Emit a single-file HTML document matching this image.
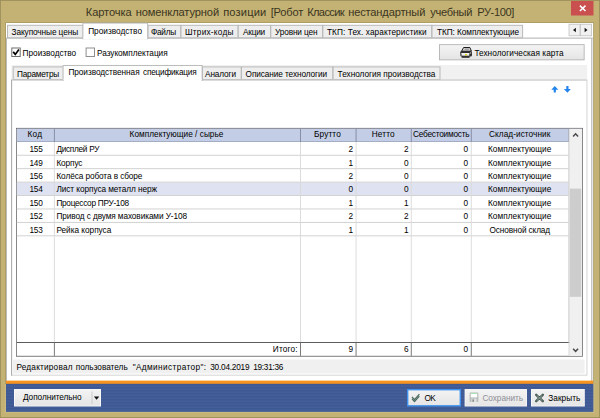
<!DOCTYPE html>
<html lang="ru">
<head>
<meta charset="utf-8">
<title>Карточка номенклатурной позиции</title>
<style>
html,body{margin:0;padding:0;}
body{width:600px;height:418px;overflow:hidden;position:relative;background:#c4b274;font-family:"Liberation Sans",sans-serif;font-size:8.25px;color:#000;}
.t{position:absolute;display:block;white-space:nowrap;line-height:12px;height:12px;}
</style>
</head>
<body>
<svg width="600" height="418" viewBox="0 0 600 418" style="position:absolute;left:0;top:0">
<defs><linearGradient id="bg" x1="0" y1="0" x2="0" y2="1"><stop offset="0" stop-color="#f3f3f3"/><stop offset="1" stop-color="#e5e5e5"/></linearGradient><pattern id="st" width="4" height="1.5" patternUnits="userSpaceOnUse"><rect width="4" height="0.75" fill="#3b5690"/><rect y="0.75" width="4" height="0.75" fill="#45609b"/></pattern></defs>
<rect x="0" y="0" width="600" height="418" fill="#c4b274"/>
<rect x="0" y="0" width="600" height="418" fill="none" stroke="#998b58" stroke-width="1.6"/>
<rect x="5.4" y="22.4" width="588.5" height="361.6" fill="#a0925a"/>
<rect x="5.2" y="384" width="589.1" height="28.7" fill="#cebf88"/>
<rect x="6" y="23" width="587.2" height="362" fill="#ffffff"/>
<rect x="571" y="1" width="22.5" height="14.5" fill="#c9504f"/>
<path d="M579.9 5.6 L585.5 11 M585.5 5.6 L579.9 11" stroke="#fff" stroke-width="1.5" fill="none"/>
<rect x="6" y="37.7" width="586.6" height="0.9" fill="#c4c4c4"/>
<rect x="6" y="38" width="0.9" height="343" fill="#b4b4b4"/>
<rect x="591.3" y="38" width="1" height="343" fill="#adadad"/>
<rect x="7" y="24.8" width="76.7" height="13.5" fill="#b9b9b9"/>
<rect x="8" y="25.8" width="74.7" height="11.5" fill="#eeeeee"/>
<rect x="147.5" y="24.8" width="33.7" height="13.5" fill="#b9b9b9"/>
<rect x="148.5" y="25.8" width="31.7" height="11.5" fill="#eeeeee"/>
<rect x="180.5" y="24.8" width="58" height="13.5" fill="#b9b9b9"/>
<rect x="181.5" y="25.8" width="56" height="11.5" fill="#eeeeee"/>
<rect x="237.8" y="24.8" width="33.2" height="13.5" fill="#b9b9b9"/>
<rect x="238.8" y="25.8" width="31.2" height="11.5" fill="#eeeeee"/>
<rect x="270.3" y="24.8" width="52.8" height="13.5" fill="#b9b9b9"/>
<rect x="271.3" y="25.8" width="50.8" height="11.5" fill="#eeeeee"/>
<rect x="322.4" y="24.8" width="109.8" height="13.5" fill="#b9b9b9"/>
<rect x="323.4" y="25.8" width="107.8" height="11.5" fill="#eeeeee"/>
<rect x="431.5" y="24.8" width="91.6" height="13.5" fill="#b9b9b9"/>
<rect x="432.5" y="25.8" width="89.6" height="11.5" fill="#eeeeee"/>
<rect x="6" y="37.7" width="586.6" height="0.9" fill="#c4c4c4"/>
<rect x="82.4" y="22.6" width="65.7" height="16.6" fill="#bcbcbc"/>
<rect x="83.4" y="23.6" width="63.7" height="14.6" fill="#ffffff"/>
<rect x="83.4" y="37" width="63.7" height="2.4" fill="#ffffff"/>
<rect x="568.6" y="23.8" width="11.8" height="12.4" fill="#c2c2c2"/>
<rect x="569.4" y="24.6" width="10.2" height="10.8" fill="#f1f1f1"/>
<rect x="580" y="23.8" width="12" height="12.4" fill="#c2c2c2"/>
<rect x="580.8" y="24.6" width="10.4" height="10.8" fill="#f1f1f1"/>
<path d="M575.9 27.8 L573 30 L575.9 32.2 Z" fill="#111"/>
<path d="M584.6 27.8 L587.5 30 L584.6 32.2 Z" fill="#111"/>
<rect x="11.3" y="47.5" width="9.4" height="9.5" fill="#6e6e6e"/>
<rect x="12.3" y="48.5" width="7.4" height="7.5" fill="#ffffff"/>
<path d="M13.2 51.9 L15.3 54.4 L18.9 49.6" stroke="#000" stroke-width="1.7" fill="none"/>
<rect x="85.6" y="47.5" width="9.4" height="9.5" fill="#8f8f8f"/>
<rect x="86.6" y="48.5" width="7.4" height="7.5" fill="#ffffff"/>
<rect x="439" y="44.2" width="145.6" height="16.1" fill="#b4b4b4"/>
<rect x="439.9" y="45.1" width="143.8" height="14.3" fill="url(#bg)"/>
<path d="M463.6 47.5 H469.9 L471.4 51.2 H461.6 Z" fill="#d9d9d9" stroke="#1c1c1c" stroke-width="1"/>
<rect x="464.6" y="48.7" width="4.4" height="0.8" fill="#6a6a6a"/>
<path d="M460.3 52.2 Q460.3 50.9 461.6 50.9 H470.6 Q472 50.9 472 52.4 V55 Q472 56.5 470.6 56.5 H461.6 Q460.3 56.5 460.3 55.2 Z" fill="#2e2e2e"/>
<rect x="461.5" y="53.1" width="7.8" height="2.6" fill="#ececec"/>
<rect x="461.5" y="53.1" width="7.8" height="0.7" fill="#ffffff"/>
<rect x="465" y="54.1" width="2.1" height="1.2" fill="#e2d400"/>
<rect x="469.9" y="52.2" width="1.3" height="1.6" fill="#9a9a9a"/>
<rect x="461.6" y="56.3" width="8" height="1.4" fill="#0c0c0c"/>
<rect x="11.4" y="65" width="575.8" height="15" fill="#f1f1f1"/>
<rect x="11.2" y="79.6" width="576.2" height="296" fill="#cfcfcf"/>
<rect x="11.2" y="79.6" width="1" height="296" fill="#a4a4a4"/>
<rect x="12.2" y="80.5" width="574.3" height="294.2" fill="#ffffff"/>
<rect x="12.7" y="66.4" width="51.2" height="13.6" fill="#b9b9b9"/>
<rect x="13.7" y="67.4" width="49.2" height="11.6" fill="#eeeeee"/>
<rect x="202" y="66.4" width="39.7" height="13.6" fill="#b9b9b9"/>
<rect x="203" y="67.4" width="37.7" height="11.6" fill="#eeeeee"/>
<rect x="241" y="66.4" width="92.3" height="13.6" fill="#b9b9b9"/>
<rect x="242" y="67.4" width="90.3" height="11.6" fill="#eeeeee"/>
<rect x="332.6" y="66.4" width="107.9" height="13.6" fill="#b9b9b9"/>
<rect x="333.6" y="67.4" width="105.9" height="11.6" fill="#eeeeee"/>
<rect x="12.2" y="79.6" width="574.3" height="0.9" fill="#cfcfcf"/>
<rect x="62.6" y="65" width="140" height="16" fill="#bcbcbc"/>
<rect x="63.6" y="66" width="138" height="14" fill="#ffffff"/>
<rect x="63.6" y="79" width="138" height="2.2" fill="#ffffff"/>
<path d="M554.8 86 L551.3 89.7 H553.7 V92.6 H555.9 V89.7 H558.3 Z" fill="#2484ee"/>
<path d="M567.4 92.7 L563.9 89 H566.3 V86.1 H568.5 V89 H570.9 Z" fill="#2484ee"/>
<rect x="16" y="128" width="566.8" height="228.7" fill="#6b6b6b"/>
<rect x="16" y="127.9" width="566.8" height="1" fill="#63676f"/>
<rect x="16.8" y="128.8" width="565.2" height="227" fill="#ffffff"/>
<rect x="16.8" y="128.8" width="552.2" height="13" fill="#c3cee6"/>
<rect x="16.8" y="141" width="552.2" height="0.9" fill="#9fa9c0"/>
<rect x="16.8" y="182.46" width="552" height="12.83" fill="#dfe3f1"/>
<rect x="16.8" y="154.8" width="552" height="0.9" fill="#cdcdcd"/>
<rect x="16.8" y="168.23" width="552" height="0.9" fill="#cdcdcd"/>
<rect x="16.8" y="181.66" width="552" height="0.9" fill="#cdcdcd"/>
<rect x="16.8" y="195.09" width="552" height="0.9" fill="#cdcdcd"/>
<rect x="16.8" y="208.52" width="552" height="0.9" fill="#cdcdcd"/>
<rect x="16.8" y="221.95" width="552" height="0.9" fill="#cdcdcd"/>
<rect x="16.8" y="235.38" width="552" height="0.9" fill="#cdcdcd"/>
<rect x="53.9" y="141.9" width="0.9" height="200.1" fill="#d9d9d9"/>
<rect x="53.9" y="128.8" width="0.9" height="13.1" fill="#7f889e"/>
<rect x="300" y="141.9" width="0.9" height="200.1" fill="#d9d9d9"/>
<rect x="300" y="128.8" width="0.9" height="13.1" fill="#7f889e"/>
<rect x="355.6" y="141.9" width="0.9" height="200.1" fill="#d9d9d9"/>
<rect x="355.6" y="128.8" width="0.9" height="13.1" fill="#7f889e"/>
<rect x="410.8" y="141.9" width="0.9" height="200.1" fill="#d9d9d9"/>
<rect x="410.8" y="128.8" width="0.9" height="13.1" fill="#7f889e"/>
<rect x="470.8" y="141.9" width="0.9" height="200.1" fill="#d9d9d9"/>
<rect x="470.8" y="128.8" width="0.9" height="13.1" fill="#7f889e"/>
<rect x="568.4" y="141.9" width="0.9" height="200.1" fill="#d9d9d9"/>
<rect x="568.4" y="128.8" width="0.9" height="13.1" fill="#7f889e"/>
<rect x="16.8" y="342" width="565.2" height="1" fill="#5c5c5c"/>
<rect x="53.9" y="342.5" width="0.9" height="13.4" fill="#6b6b6b"/>
<rect x="300" y="342.5" width="0.9" height="13.4" fill="#6b6b6b"/>
<rect x="355.6" y="342.5" width="0.9" height="13.4" fill="#6b6b6b"/>
<rect x="410.8" y="342.5" width="0.9" height="13.4" fill="#6b6b6b"/>
<rect x="470.8" y="342.5" width="0.9" height="13.4" fill="#6b6b6b"/>
<rect x="569.3" y="128.8" width="12.7" height="227" fill="#f0f0f0"/>
<rect x="568.6" y="128.8" width="0.8" height="227" fill="#d0d0d0"/>
<rect x="569.8" y="188.6" width="11.4" height="108.2" fill="#cdcdcd"/>
<path d="M573.1 136.4 L575.6 133.8 L578.1 136.4" stroke="#4a4a4a" stroke-width="1.5" fill="none"/>
<path d="M573.1 348.7 L575.6 351.3 L578.1 348.7" stroke="#4a4a4a" stroke-width="1.5" fill="none"/>
<rect x="13" y="359.5" width="571.6" height="14" fill="#f0f0f0"/>
<rect x="6" y="380.6" width="587.2" height="3.6" fill="#f7941f"/>
<rect x="6" y="383.8" width="587.2" height="27.8" fill="#405b96"/>
<rect x="6" y="384.2" width="587.2" height="27.4" fill="url(#st)"/>
<rect x="14" y="389" width="87" height="17.5" fill="#f8f8f8"/>
<rect x="14.9" y="389.9" width="85.2" height="15.7" fill="url(#bg)"/>
<rect x="91.6" y="391.5" width="0.8" height="12.5" fill="#c4c4c4"/>
<path d="M93.9 396.4 H99.3 L96.6 399.7 Z" fill="#111"/>
<rect x="407" y="389" width="54" height="17.5" fill="#3f93ee"/>
<rect x="408.4" y="390.4" width="51.2" height="14.7" fill="url(#bg)"/>
<path d="M412 397 L414.5 399.6 L419.4 394.2" stroke="#48695e" stroke-width="1.2" fill="none"/>
<path d="M412 398.9 L414.5 401.5 L419.4 396.1" stroke="#48695e" stroke-width="1.2" fill="none"/>
<rect x="464.6" y="389" width="62.4" height="17.5" fill="#f4f4f4"/>
<rect x="465.5" y="389.9" width="60.6" height="15.7" fill="url(#bg)"/>
<rect x="469.6" y="392.6" width="8.8" height="9.4" fill="#b6bcba" rx="0.8"/>
<rect x="470.8" y="393" width="6.4" height="4.4" fill="#ffffff"/>
<rect x="470.8" y="393.2" width="6.4" height="0.8" fill="#8fdca2"/>
<rect x="471.4" y="398.6" width="5.2" height="3.4" fill="#dcdfde"/>
<rect x="472.4" y="399.4" width="1.6" height="2.4" fill="#858b89"/>
<rect x="531" y="389" width="53.8" height="17.5" fill="#f8f8f8"/>
<rect x="531.9" y="389.9" width="52" height="15.7" fill="url(#bg)"/>
<path d="M536.2 394.8 L542.8 401.2 M542.8 394.8 L536.2 401.2" stroke="#41564f" stroke-width="2.3" fill="none" stroke-linecap="round"/>
<path d="M536.6 395.2 L542.4 400.8 M542.4 395.2 L536.6 400.8" stroke="#b9c9c2" stroke-width="0.7" fill="none"/>
</svg>
<span class="t" style="top:6.00px;font-size:11.1px;color:#3a3520;left:85.80px;letter-spacing:-0.100px;">Карточка </span>
<span class="t" style="top:6.00px;font-size:11.1px;color:#3a3520;left:135.70px;letter-spacing:-0.114px;">номенклатурной </span>
<span class="t" style="top:6.00px;font-size:11.1px;color:#3a3520;left:223.20px;letter-spacing:0.172px;">позиции </span>
<span class="t" style="top:6.00px;font-size:11.1px;color:#3a3520;left:270.70px;letter-spacing:-0.172px;">[Робот </span>
<span class="t" style="top:6.00px;font-size:11.1px;color:#3a3520;left:307.20px;letter-spacing:-0.636px;">Классик </span>
<span class="t" style="top:6.00px;font-size:11.1px;color:#3a3520;left:348.20px;letter-spacing:-0.157px;">нестандартный </span>
<span class="t" style="top:6.00px;font-size:11.1px;color:#3a3520;left:430.20px;letter-spacing:-0.290px;">учебный </span>
<span class="t" style="top:6.00px;font-size:11.1px;color:#3a3520;left:477.20px;letter-spacing:-0.386px;">РУ-100]</span>
<span class="t" style="top:27.00px;left:11.60px;letter-spacing:-0.084px;">Закупочные цены</span>
<span class="t" style="top:26.00px;left:88.20px;letter-spacing:0.000px;">Производство</span>
<span class="t" style="top:27.00px;left:151.00px;letter-spacing:-0.244px;">Файлы</span>
<span class="t" style="top:27.00px;left:185.00px;letter-spacing:0.233px;">Штрих-коды</span>
<span class="t" style="top:27.00px;left:243.00px;letter-spacing:-0.212px;">Акции</span>
<span class="t" style="top:27.00px;left:275.00px;letter-spacing:-0.127px;">Уровни цен</span>
<span class="t" style="top:27.00px;left:327.00px;letter-spacing:0.076px;">ТКП: Тех. характеристики</span>
<span class="t" style="top:27.00px;left:437.00px;letter-spacing:-0.065px;">ТКП: Комплектующие</span>
<span class="t" style="top:48.00px;left:22.60px;letter-spacing:-0.016px;">Производство</span>
<span class="t" style="top:48.00px;left:97.00px;letter-spacing:-0.035px;">Разукомплектация</span>
<span class="t" style="top:48.00px;left:474.40px;letter-spacing:0.038px;">Технологическая карта</span>
<span class="t" style="top:69.00px;left:17.00px;letter-spacing:-0.220px;">Параметры</span>
<span class="t" style="top:67.00px;left:68.40px;letter-spacing:-0.048px;">Производственная </span>
<span class="t" style="top:67.00px;left:143.10px;letter-spacing:-0.233px;">спецификация</span>
<span class="t" style="top:69.00px;left:205.00px;letter-spacing:-0.109px;">Аналоги</span>
<span class="t" style="top:69.00px;left:245.60px;letter-spacing:-0.092px;">Описание технологии</span>
<span class="t" style="top:69.00px;left:337.60px;letter-spacing:-0.021px;">Технология производства</span>
<span class="t" style="top:129.00px;left:27.40px;letter-spacing:0.323px;">Код</span>
<span class="t" style="top:129.00px;left:129.60px;letter-spacing:0.028px;">Комплектующие / сырье</span>
<span class="t" style="top:129.00px;left:314.00px;letter-spacing:0.134px;">Брутто</span>
<span class="t" style="top:129.00px;left:371.70px;letter-spacing:0.134px;">Нетто</span>
<span class="t" style="top:129.00px;left:413.00px;letter-spacing:-0.212px;">Себестоимость</span>
<span class="t" style="top:129.00px;left:489.00px;letter-spacing:0.062px;">Склад-источник</span>
<span class="t" style="top:144.00px;left:29.60px;letter-spacing:-0.322px;">155</span>
<span class="t" style="top:144.00px;left:56.40px;letter-spacing:-0.286px;">Дисплей РУ</span>
<span class="t" style="top:144.00px;right:247.00px;">2</span>
<span class="t" style="top:144.00px;right:191.50px;">2</span>
<span class="t" style="top:144.00px;right:132.00px;">0</span>
<span class="t" style="top:144.00px;left:488.00px;letter-spacing:0.045px;">Комплектующие</span>
<span class="t" style="top:158.00px;left:29.60px;letter-spacing:-0.322px;">149</span>
<span class="t" style="top:158.00px;left:56.40px;letter-spacing:-0.102px;">Корпус</span>
<span class="t" style="top:158.00px;right:247.00px;">1</span>
<span class="t" style="top:158.00px;right:191.50px;">0</span>
<span class="t" style="top:158.00px;right:132.00px;">0</span>
<span class="t" style="top:158.00px;left:488.00px;letter-spacing:0.045px;">Комплектующие</span>
<span class="t" style="top:171.00px;left:29.60px;letter-spacing:-0.322px;">156</span>
<span class="t" style="top:171.00px;left:56.40px;letter-spacing:-0.086px;">Колёса робота в сборе</span>
<span class="t" style="top:171.00px;right:247.00px;">2</span>
<span class="t" style="top:171.00px;right:191.50px;">0</span>
<span class="t" style="top:171.00px;right:132.00px;">0</span>
<span class="t" style="top:171.00px;left:488.00px;letter-spacing:0.045px;">Комплектующие</span>
<span class="t" style="top:184.00px;left:29.60px;letter-spacing:-0.322px;">154</span>
<span class="t" style="top:184.00px;left:56.40px;letter-spacing:-0.060px;">Лист корпуса металл нерж</span>
<span class="t" style="top:184.00px;right:247.00px;">0</span>
<span class="t" style="top:184.00px;right:191.50px;">0</span>
<span class="t" style="top:184.00px;right:132.00px;">0</span>
<span class="t" style="top:184.00px;left:488.00px;letter-spacing:0.045px;">Комплектующие</span>
<span class="t" style="top:198.00px;left:29.60px;letter-spacing:-0.322px;">150</span>
<span class="t" style="top:198.00px;left:56.40px;letter-spacing:-0.280px;">Процессор ПРУ-108</span>
<span class="t" style="top:198.00px;right:247.00px;">1</span>
<span class="t" style="top:198.00px;right:191.50px;">1</span>
<span class="t" style="top:198.00px;right:132.00px;">0</span>
<span class="t" style="top:198.00px;left:488.00px;letter-spacing:0.045px;">Комплектующие</span>
<span class="t" style="top:211.00px;left:29.60px;letter-spacing:-0.322px;">152</span>
<span class="t" style="top:211.00px;left:56.40px;letter-spacing:-0.091px;">Привод с двумя маховиками У-108</span>
<span class="t" style="top:211.00px;right:247.00px;">2</span>
<span class="t" style="top:211.00px;right:191.50px;">2</span>
<span class="t" style="top:211.00px;right:132.00px;">0</span>
<span class="t" style="top:211.00px;left:488.00px;letter-spacing:0.045px;">Комплектующие</span>
<span class="t" style="top:225.00px;left:29.60px;letter-spacing:-0.322px;">153</span>
<span class="t" style="top:225.00px;left:56.40px;letter-spacing:-0.016px;">Рейка корпуса</span>
<span class="t" style="top:225.00px;right:247.00px;">1</span>
<span class="t" style="top:225.00px;right:191.50px;">1</span>
<span class="t" style="top:225.00px;right:132.00px;">0</span>
<span class="t" style="top:225.00px;left:489.50px;letter-spacing:-0.119px;">Основной склад</span>
<span class="t" style="top:344.00px;left:272.80px;letter-spacing:0.180px;">Итого:</span>
<span class="t" style="top:344.00px;right:247.00px;">9</span>
<span class="t" style="top:344.00px;right:191.50px;">6</span>
<span class="t" style="top:344.00px;right:132.00px;">0</span>
<span class="t" style="top:362.00px;left:16.40px;letter-spacing:0.198px;">Редактировал </span>
<span class="t" style="top:362.00px;left:75.70px;letter-spacing:-0.007px;">пользователь </span>
<span class="t" style="top:362.00px;left:132.70px;letter-spacing:0.377px;">"Администратор": </span>
<span class="t" style="top:362.00px;left:210.20px;letter-spacing:-0.210px;">30.04.2019 </span>
<span class="t" style="top:362.00px;left:253.20px;letter-spacing:-0.266px;">19:31:36</span>
<span class="t" style="top:392.00px;left:23.00px;letter-spacing:-0.061px;">Дополнительно</span>
<span class="t" style="top:393.00px;left:424.40px;letter-spacing:-0.661px;">OK</span>
<span class="t" style="top:393.00px;color:#8f8f98;left:482.40px;letter-spacing:-0.044px;">Сохранить</span>
<span class="t" style="top:393.00px;left:548.20px;letter-spacing:0.074px;">Закрыть</span>
</body>
</html>
